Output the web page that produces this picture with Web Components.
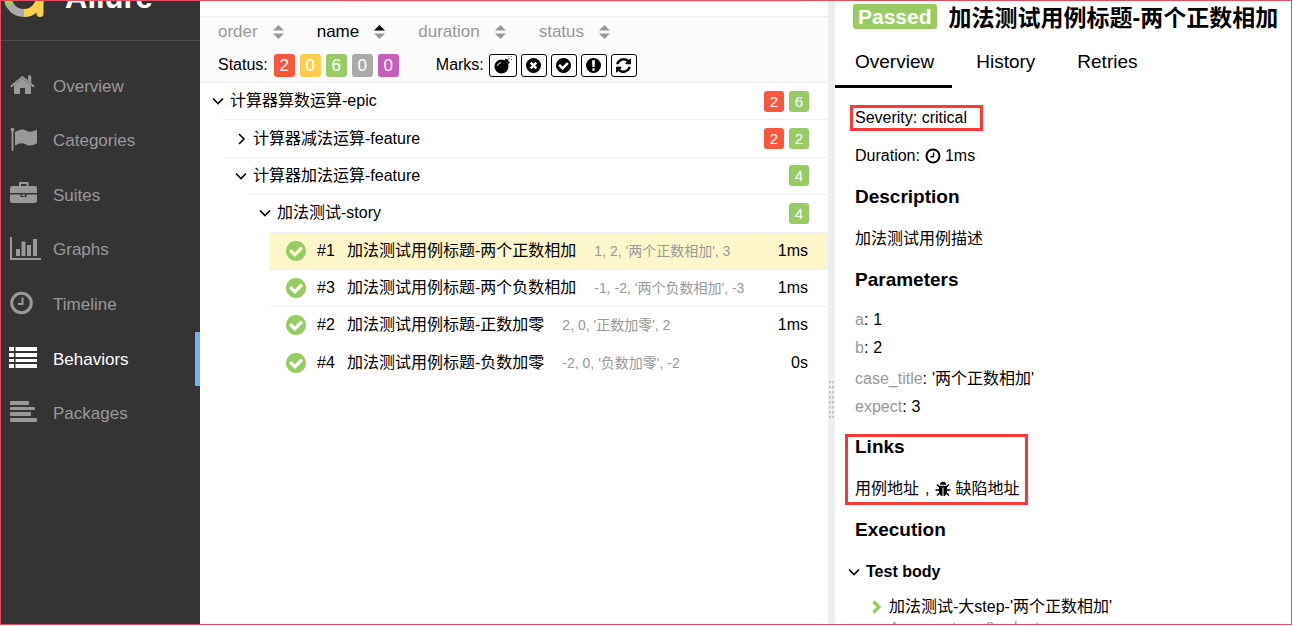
<!DOCTYPE html>
<html lang="en">
<head>
<meta charset="utf-8">
<title>Allure Report</title>
<style>
  html, body { height: 100%; margin: 0; }
  body {
    box-sizing: border-box;
    padding: 0 1px 1px 0;
    overflow: hidden;
    background: #fff;
    color: #000;
    font: 16px/24px "Liberation Sans", "Noto Sans CJK SC", sans-serif;
    --line: #eceff1;
    --muted: #999;
    --failed: #f6583e;
    --broken: #fbcf4e;
    --passed: #97cc64;
    --skipped: #aaa;
    --unknown: #ca5cbd;
  }
</style>
</head>
<body>
<allure-app></allure-app>
<script>
const ICONS = {
  home: ['0 0 32 24', '<path d="M13.500 5.500 22 12.600V20q0 1-1 1h-5v-6h-5v6H6q-1 0-1-1v-7.400z"/><path d="M2.400 13.200 13.500 4l11 9.200" fill="none" stroke="currentColor" stroke-width="2" stroke-linecap="round" stroke-linejoin="round"/><path d="M19 2.500h3.300V10L19 7.300z"/>'],
  flag: ['0 0 32 24', '<circle cx="3.500" cy="2.700" r="1.900"/><rect x="2.600" y="3" width="1.800" height="21" rx=".8"/><path d="M6 5q4-2.500 7-2.500c4 0 5 2.300 8 2.300 2.500 0 4-1 6-2q1 0 1 1v12.500q-3.500 2.200-7 2.200c-3.500 0-5-2.300-8.500-2.300-2.500 0-4 1-6.500 2.300z"/>'],
  briefcase: ['0 0 32 24', '<path d="M10 4V1q0-1.200 1.200-1.200h7Q19.500-.2 19.500 1v3h6.300q2.200 0 2.200 2.200V11H1V6.200Q1 4 3.200 4zm2 0h5.500V2H12zM1 12.500h10.500V15h6v-2.500H28v6.300q0 2.200-2.200 2.200H3.200Q1 21 1 18.800z"/><rect x="13" y="12.500" width="3" height="1.500"/>'],
  chart: ['0 0 32 24', '<path d="M1 1h2v21h29v2H1zM7 13h4v7H7zM12.500 5.500h4V20h-4zM18 9h4v11h-4zM24 3h4v17h-4z"/>'],
  clock: ['0 0 32 24', '<circle cx="12.500" cy="12" r="9.800" fill="none" stroke="currentColor" stroke-width="3"/><path d="M13.500 6.500V13H9" fill="none" stroke="currentColor" stroke-width="2"/>'],
  list: ['0 0 32 24', '<path d="M0 1h5v4H0zM6.500 1H28v4H6.500zM0 7h5v4H0zM6.500 7H28v4H6.500zM0 13h5v3H0zM6.500 13H28v3H6.500zM0 18h5v4H0zM6.500 18H28v4H6.500z"/>'],
  align: ['0 0 32 24', '<rect x="1" y="1" width="19" height="4" rx="1"/><rect x="1" y="7" width="25" height="3" rx="1"/><rect x="1" y="12" width="21" height="4" rx="1"/><rect x="1" y="18" width="27" height="4" rx="1"/>'],
  check: ['128 128 1536 1536', '<path d="M1412 734q0-28-18-46l-91-90q-19-19-45-19t-45 19l-408 407-226-226q-19-19-45-19t-45 19l-91 90q-18 18-18 46 0 27 18 45l362 362q19 19 45 19 27 0 46-19l543-543q18-18 18-45zm252 162q0 209-103 385.500t-279.500 279.500-385.500 103-385.500-103-279.500-279.500-103-385.500 103-385.500 279.500-279.500 385.500-103 385.500 103 279.500 279.500 103 385.500z"/>'],
  cross: ['0 0 16 16', '<circle cx="8" cy="8" r="8"/><path d="m5 5 6 6m0-6-6 6" stroke="#fff" stroke-width="2.600"/>'],
  exclaim: ['0 0 16 16', '<circle cx="8" cy="8" r="8"/><path d="M6.500 2.500h3L9.200 9.500H6.800zM6.700 11h2.600v2.500H6.700z" fill="#fff"/>'],
  refresh: ['128 128 1536 1536', '<path d="M1639 1056q0 5-1 7-64 268-268 434.500t-478 166.500q-146 0-282.500-55t-243.500-157l-129 129q-19 19-45 19t-45-19-19-45v-448q0-26 19-45t45-19h448q26 0 45 19t19 45-19 45l-137 137q71 66 161 102t187 36q134 0 250-65t186-179q11-17 53-117 8-23 30-23h192q13 0 22.500 9.500t9.500 22.500zm25-800v448q0 26-19 45t-45 19h-448q-26 0-45-19t-19-45 19-45l138-138q-148-137-349-137-134 0-250 65t-186 179q-11 17-53 117-8 23-30 23h-199q-13 0-22.500-9.500t-9.500-22.500v-7q65-268 270-434.500t480-166.500q146 0 284 55.500t245 156.500l130-129q19-19 45-19t45 19 19 45z"/>'],
  bomb: ['0 0 18 18', '<circle cx="7.500" cy="10.500" r="7"/><path d="m10.500 4 1.500-1.500 4 4-1.500 1.500z"/><path d="M13 4.500q1-2 2.500-2M16.500 1l1-1M17 3.500h1M14 .3l.5.700" fill="none" stroke="currentColor" stroke-width=".8"/><path d="M3.500 10Q4 7 7 6.500" fill="none" stroke="#fff"/>'],
  time: ['0 0 16 16', '<circle cx="8" cy="8" r="6.500" fill="none" stroke="currentColor" stroke-width="2"/><path d="M8.500 4.500v4.300H5.500" fill="none" stroke="currentColor" stroke-width="1.400"/>'],
  bug: ['0 0 16 16', '<path d="M5 3.800a3 3 0 0 1 6 0zM4 4.800h8V11q-.3 4-3.500 4V6.500h-1V15Q4.300 15 4 11z"/><path d="M4.500 6 2 3.500M11.500 6 14 3.500M4 9H.5M12 9h3.500M4.500 12 2 14.500M11.500 12l2.500 2.500" stroke="currentColor" stroke-width="1.400"/>'],
  down: ['0 0 12 12', '<path d="m1 3.500 5 5 5-5" fill="none" stroke="currentColor" stroke-width="1.600"/>'],
  right: ['0 0 12 12', '<path d="m4 1 5 5-5 5" fill="none" stroke="currentColor" stroke-width="1.600"/>'],
  step: ['0 0 12 14', '<path d="m2.500 1.500 5.500 5.500-5.500 5.500" fill="none" stroke="currentColor" stroke-width="3.400"/>'],
  logo: ['0 0 44 44', '<g fill="none" stroke-width="8"><path d="M9.500 31A16 16 0 0 1 7 22V16" stroke="#97cc64"/><path d="M23 38A16 16 0 0 1 9.300 30.500" stroke="#aaa"/><path d="M39 22A16 16 0 0 1 23 38" stroke="#fbcf4e"/><path d="M39 20v18.500" stroke="#fbcf4e" stroke-width="7" stroke-linecap="round"/></g>']
};

const define = (name, html, setup) => customElements.define(name, class extends HTMLElement {
  connectedCallback() {
    if (this.shadowRoot) return;
    const root = this.attachShadow({ mode: 'open' });
    root.innerHTML = typeof html === 'function' ? html(this) : html;
    if (setup) setup(this, root);
  }
});

define('ui-icon', el => {
  const [box, body] = ICONS[el.getAttribute('name')];
  return `<style>:host{display:block;flex:none;width:16px;height:16px}svg{display:block;width:100%;height:100%;fill:currentColor}</style>
    <svg viewBox="${box}" aria-hidden="true">${body}</svg>`;
});

define('nav-item', el => `<style>
  :host { display: block; color: var(--muted); font-size: 17px; }
  :host([active]) { color: #fff; }
  a { box-sizing: border-box; height: 100%; display: flex; align-items: center; gap: 12px; padding: 1px 0 0 8px; color: inherit; text-decoration: none; }
  :host([active]) a { border-right: 5px solid #6fb1f0; }
  ui-icon { width: 32px; height: 24px; margin-bottom: 4px; }
  </style><a href="#"><ui-icon name="${el.getAttribute('icon')}"></ui-icon><slot></slot></a>`);

define('side-nav', `<style>
  :host { display: block; flex: none; width: 199px; background: #343434; }
  .brand { box-sizing: border-box; height: 40px; display: flex; align-items: flex-end; gap: 20px; padding: 0 0 26px; border-bottom: 1px solid #4e4e4e; overflow: hidden; color: #fff; font: bold 31px/32px "Liberation Sans", sans-serif; }
  .brand ui-icon { width: 44px; height: 44px; margin-bottom: -5px; }
  nav { display: grid; grid-auto-rows: 1fr; height: 382px; padding-top: 18px; }
  </style>
  <div class="brand"><ui-icon name="logo"></ui-icon><span>Allure</span></div>
  <nav>
    <nav-item icon="home">Overview</nav-item>
    <nav-item icon="flag">Categories</nav-item>
    <nav-item icon="briefcase">Suites</nav-item>
    <nav-item icon="chart">Graphs</nav-item>
    <nav-item icon="clock">Timeline</nav-item>
    <nav-item icon="list" active>Behaviors</nav-item>
    <nav-item icon="align">Packages</nav-item>
  </nav>`);

define('sort-key', `<style>
  :host { display: block; color: var(--muted); font-size: 17px; }
  button { all: unset; display: flex; align-items: center; gap: 15px; cursor: pointer; }
  :host([active]) button { color: #000; }
  svg { display: block; width: 11px; height: 16px; fill: var(--muted); }
  :host([active]) .up { fill: #000; }
  </style><button><slot></slot><svg viewBox="0 0 11 16"><path class="up" d="M0 6.500 5.500 1 11 6.500z"/><path d="M0 9.500h11L5.500 15z"/></svg></button>`);

define('count-badge', `<style>
  :host { display: block; flex: none; width: 20px; border-radius: 3px; text-align: center; color: #fff; font-size: 15px; line-height: 21px; background: var(--passed); }
  :host([kind=failed]) { background: var(--failed); }
  :host([kind=broken]) { background: var(--broken); }
  :host([kind=skipped]) { background: var(--skipped); }
  :host([kind=unknown]) { background: var(--unknown); }
  :host([large]) { width: 21px; font-size: 17px; line-height: 23px; }
  </style><slot></slot>`);

define('mark-button', el => `<style>
  :host { display: block; }
  button { box-sizing: border-box; display: flex; align-items: center; justify-content: center; width: 26px; height: 23px; padding: 0; border: 1px solid #000; border-radius: 3px; background: #fff; color: #000; }
  ui-icon { width: 15px; height: 15px; }
  :host([wide]) button { width: 28px; }
  :host([wide]) ui-icon { width: 18px; height: 18px; }
  </style><button aria-label="${el.getAttribute('label')}"><ui-icon name="${el.getAttribute('icon')}"></ui-icon></button>`);

define('tree-node', el => `<style>
  :host { display: block; }
  :host([level="1"]) { margin-left: 23px; }
  :host([level="2"]) { margin-left: 47px; }
  button { all: unset; box-sizing: border-box; width: 100%; height: 100%; display: flex; align-items: center; gap: 6px; padding: 0 19px 0 12px; border-top: 1px solid var(--line); cursor: pointer; }
  ui-icon { width: 12px; height: 12px; }
  .name { flex: 1; }
  .counts { display: flex; gap: 5px; }
  </style><button><ui-icon name="${el.hasAttribute('closed') ? 'right' : 'down'}"></ui-icon><span class="name"><slot></slot></span><span class="counts"><slot name="count"></slot></span></button>`);

define('tree-case', el => `<style>
  :host { display: block; margin-left: 70px; }
  a { box-sizing: border-box; height: 100%; display: flex; align-items: center; padding: 0 20px 0 16px; border-top: 1px solid var(--line); color: inherit; text-decoration: none; white-space: nowrap; }
  :host([selected]) a { background: #fdf6ca; }
  :host([plain]) a { border-top-color: transparent; }
  ui-icon { width: 20px; height: 20px; color: var(--passed); }
  .order { width: 30px; margin-left: 11px; }
  .params { flex: 1; margin-left: 18px; color: var(--muted); font-size: 14px; }
  </style><a href="#"><ui-icon name="check"></ui-icon><span class="order">#${el.getAttribute('order')}</span><span><slot></slot></span><span class="params"><slot name="params"></slot></span><span>${el.getAttribute('time')}</span></a>`);

define('behavior-tree', `<style>
  :host { display: block; flex: 157 1 0; min-width: 0; }
  .search { height: 15px; border-bottom: 1px solid var(--line); }
  .search::before { content: ""; display: block; height: 1px; margin: 0 19px 0 143px; background: #e9dfe2; }
  .bar { height: 65px; background: #fbfbfb; padding-left: 18px; }
  .sort { display: flex; gap: 33px; padding-top: 3px; }
  .filter { display: flex; align-items: center; padding-top: 9px; }
  .group { display: flex; gap: 5px; margin-left: 6px; }
  .marks { margin-left: 37px; }
  .marks + .group { gap: 4px; margin-left: 5px; }
  .rows { display: grid; grid-auto-rows: 1fr; height: 299px; }
  </style>
  <div class="search"></div>
  <div class="bar">
    <div class="sort"><sort-key>order</sort-key><sort-key active>name</sort-key><sort-key>duration</sort-key><sort-key>status</sort-key></div>
    <div class="filter">
      <span>Status:</span>
      <div class="group"><count-badge large kind="failed">2</count-badge><count-badge large kind="broken">0</count-badge><count-badge large>6</count-badge><count-badge large kind="skipped">0</count-badge><count-badge large kind="unknown">0</count-badge></div>
      <span class="marks">Marks:</span>
      <div class="group"><mark-button wide icon="bomb" label="Flaky"></mark-button><mark-button icon="cross" label="New failed"></mark-button><mark-button icon="check" label="New passed"></mark-button><mark-button icon="exclaim" label="New broken"></mark-button><mark-button icon="refresh" label="Retries"></mark-button></div>
    </div>
  </div>
  <div class="rows">
    <tree-node>计算器算数运算-epic<count-badge slot="count" kind="failed">2</count-badge><count-badge slot="count">6</count-badge></tree-node>
    <tree-node level="1" closed>计算器减法运算-feature<count-badge slot="count" kind="failed">2</count-badge><count-badge slot="count">2</count-badge></tree-node>
    <tree-node level="1">计算器加法运算-feature<count-badge slot="count">4</count-badge></tree-node>
    <tree-node level="2">加法测试-story<count-badge slot="count">4</count-badge></tree-node>
    <tree-case selected order="1" time="1ms">加法测试用例标题-两个正数相加<span slot="params">1, 2, '两个正数相加', 3</span></tree-case>
    <tree-case order="3" time="1ms">加法测试用例标题-两个负数相加<span slot="params">-1, -2, '两个负数相加', -3</span></tree-case>
    <tree-case order="2" time="1ms">加法测试用例标题-正数加零<span slot="params">2, 0, '正数加零', 2</span></tree-case>
    <tree-case plain order="4" time="0s">加法测试用例标题-负数加零<span slot="params">-2, 0, '负数加零', -2</span></tree-case>
  </div>`);

define('pane-gutter', `<style>
  :host { display: flex; flex: none; width: 7px; padding-top: 380px; box-sizing: border-box; background: var(--line); }
  i { width: 6px; height: 37px; background: conic-gradient(#c6c8ca 25%, transparent 0) 0 0 / 3px 5px; }
  </style><i></i>`);

define('tab-link', `<style>
  :host { display: block; font-size: 19px; }
  a { display: block; padding: 0 18px 0 20px; line-height: 46px; border-bottom: 3px solid transparent; color: inherit; text-decoration: none; }
  :host([active]) a { border-color: #000; }
  </style><a href="#"><slot></slot></a>`);

define('marked-area', `<style>
  :host { display: block; position: relative; width: fit-content; }
  :host::after { content: ""; position: absolute; inset: -1px -16px -1px -5px; border: 3px solid #fb3838; pointer-events: none; }
  :host([block])::after { inset: -1px -9px -4px -10px; }
  </style><slot></slot>`);

define('case-detail', `<style>
  :host { display: block; flex: 114 1 0; min-width: 0; }
  header { display: flex; align-items: flex-start; gap: 12px; padding: 3px 0 0 18px; white-space: nowrap; }
  .status { padding: 0 5px; border-radius: 3px; background: var(--passed); color: #fff; font: bold 21px/25px "Liberation Sans", sans-serif; }
  h1 { margin: 0; font-size: 23px; line-height: 28px; }
  .tabs { display: flex; gap: 4px; padding-top: 7px; }
  .body { padding: 18px 20px 0; }
  .meta { display: flex; align-items: center; margin-top: 14px; }
  .meta ui-icon { margin: 0 4px 0 5px; }
  h3 { margin: 17px 0 18px; font-size: 19px; line-height: 24px; }
  dl { margin: -4px 0 14px; line-height: 28px; }
  dl div { display: flex; gap: 5px; }
  dt { color: var(--muted); }
  dt::after { content: ":"; color: #000; }
  dd { margin: 0; }
  .tall { padding-top: 3px; }
  .links { display: flex; gap: 6px; }
  marked-area h3 { margin-top: 0; }
  a { display: flex; align-items: center; gap: 4px; color: inherit; text-decoration: none; }
  .test { display: flex; align-items: center; gap: 6px; margin: 15px 0 11px -7px; font-weight: bold; }
  .test ui-icon { width: 12px; height: 12px; }
  .step { display: grid; grid-template-columns: 12px auto; column-gap: 6px; align-items: center; padding-left: 16px; white-space: nowrap; }
  .step ui-icon { width: 12px; height: 14px; color: var(--passed); }
  .note { grid-column: 2; color: var(--muted); font-size: 15px; line-height: 16px; }
  </style>
  <header><span class="status">Passed</span><h1>加法测试用例标题-两个正数相加</h1></header>
  <div class="tabs"><tab-link active>Overview</tab-link><tab-link>History</tab-link><tab-link>Retries</tab-link></div>
  <div class="body">
    <marked-area>Severity: critical</marked-area>
    <div class="meta">Duration: <ui-icon name="time"></ui-icon>1ms</div>
    <h3>Description</h3>
    <div>加法测试用例描述</div>
    <h3>Parameters</h3>
    <dl><div><dt>a</dt><dd>1</dd></div><div><dt>b</dt><dd>2</dd></div><div class="tall"><dt>case_title</dt><dd>'两个正数相加'</dd></div><div><dt>expect</dt><dd>3</dd></div></dl>
    <marked-area block>
      <h3>Links</h3>
      <div class="links"><a href="#">用例地址</a><span>,</span><a href="#"><ui-icon name="bug"></ui-icon>缺陷地址</a></div>
    </marked-area>
    <h3>Execution</h3>
    <div class="test"><ui-icon name="down"></ui-icon>Test body</div>
    <div class="step"><ui-icon name="step"></ui-icon><span>加法测试-大step-'两个正数相加'</span><span class="note">4 parameters, 3 sub-steps</span></div>
  </div>`);

define('allure-app', `<style>
  :host { box-sizing: border-box; display: flex; height: 100%; border: 1px solid #e5505f; overflow: hidden; }
  </style>
  <side-nav></side-nav><behavior-tree></behavior-tree><pane-gutter></pane-gutter><case-detail></case-detail>`);
</script>
</body>
</html>
